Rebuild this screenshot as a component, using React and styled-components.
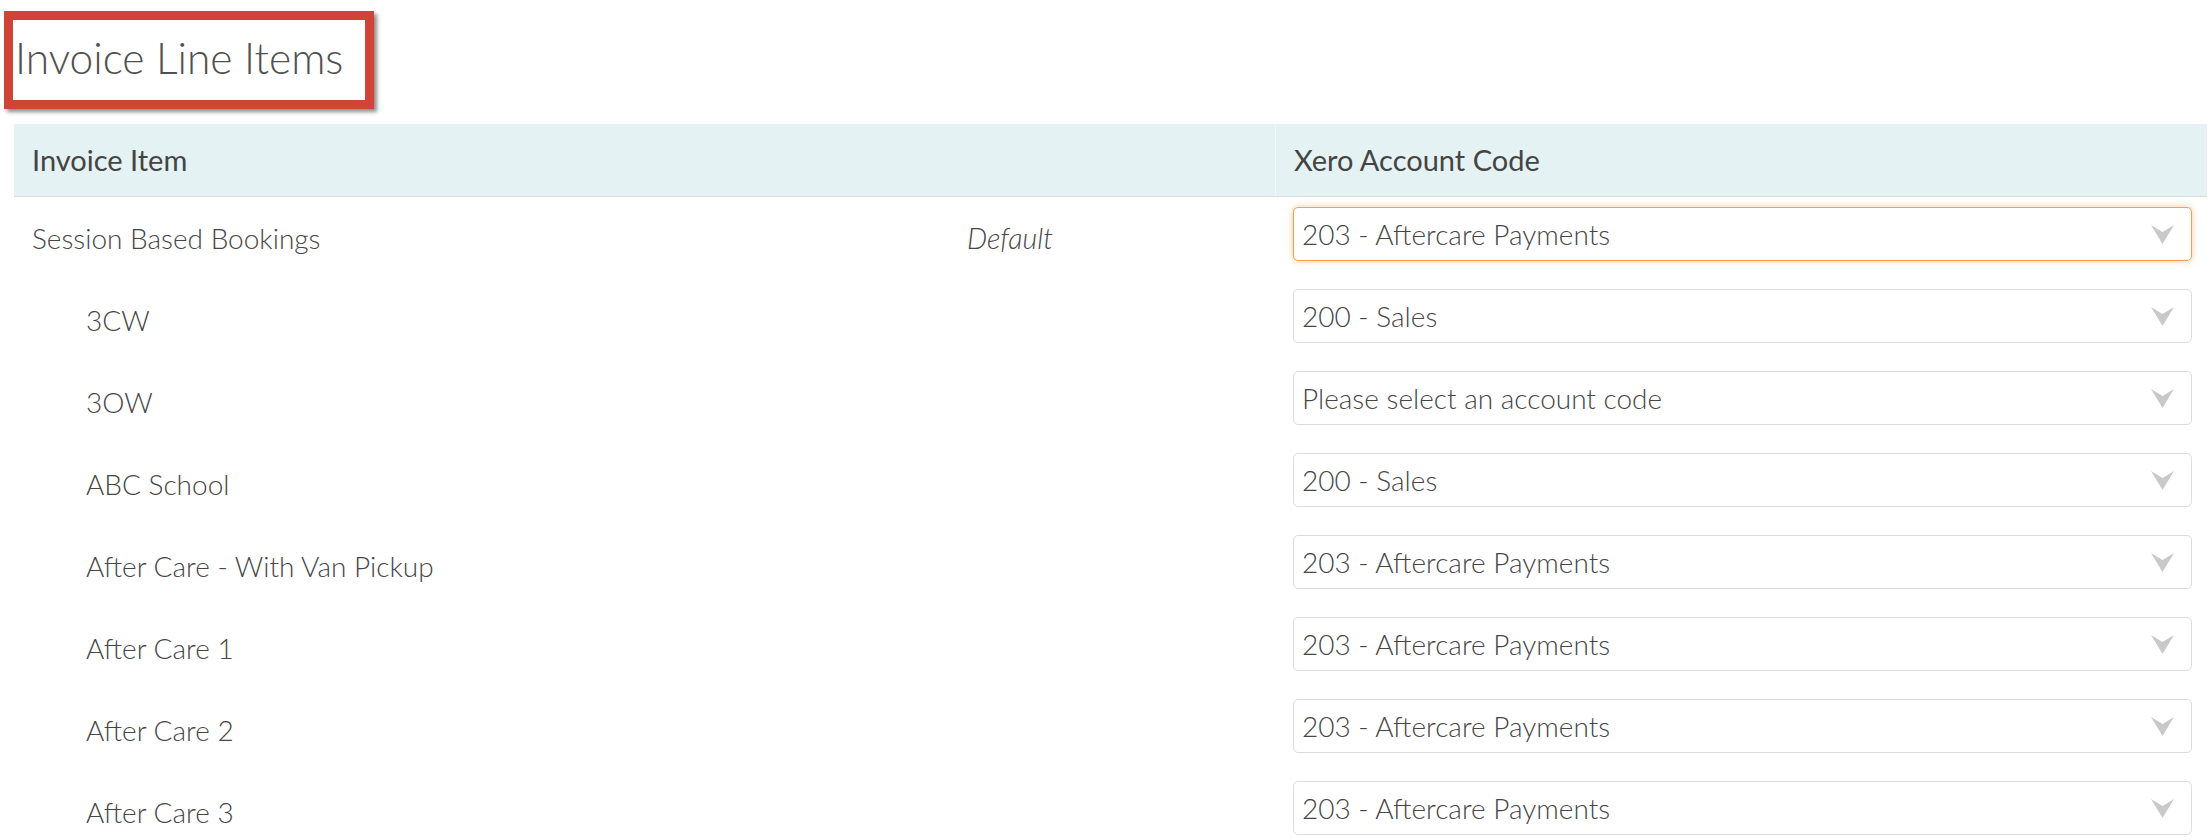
import styled, { createGlobalStyle } from "styled-components";

const GlobalStyle = createGlobalStyle`
  html, body {
    margin: 0;
    padding: 0;
    background: #ffffff;
    font-family: "Lato", "Open Sans", sans-serif;
    color: #555555;
  }
`;

const Page = styled.div`
  width: 2210px;
  height: 840px;
  overflow: hidden;
  padding: 0 3px 0 14px;
  box-sizing: border-box;
`;

const TitleBar = styled.div`
  height: 124px;
  display: flex;
  align-items: flex-start;
  margin-left: -10px;
  padding-top: 11px;
  box-sizing: border-box;
`;

const Highlight = styled.div`
  border: 9px solid #cf4437;
  box-shadow: 3px 3px 4px rgba(0, 0, 0, 0.45);
  height: 98px;
  width: 370px;
  box-sizing: border-box;
  display: flex;
  align-items: center;
  padding-left: 2px;
  padding-bottom: 5px;
`;

const Title = styled.h2`
  margin: 0;
  font-family: "Lato", sans-serif;
  font-weight: 300;
  font-size: 42.5px;
  color: #505050;
  white-space: nowrap;
`;

const Table = styled.div`
  display: grid;
  grid-template-columns: 941px 320px 1fr;
`;

const HeadCell = styled.div`
  grid-column: ${(p) => p.$span || "auto"};
  height: 73px;
  background: #e4f2f3;
  border-bottom: 1px solid #d3dfe0;
  border-left: ${(p) => (p.$divider ? "1px solid #f2f8f8" : "none")};
  box-sizing: border-box;
  display: flex;
  align-items: center;
  padding-left: 18px;
  font-size: 29px;
  font-weight: 400;
  color: #444444;
  padding-bottom: 2px;
`;

const Cell = styled.div`
  height: 82px;
  box-sizing: border-box;
  padding: 10px ${(p) => (p.$select ? "15px" : "0")} 0 ${(p) => p.$indent || "18px"};
  display: flex;
  align-items: flex-start;
`;

const Label = styled.span`
  height: 54px;
  display: flex;
  align-items: center;
  padding-top: 8px;
  box-sizing: border-box;
  font-size: ${(p) => (p.$italic ? "28.5px" : "28px")};
  font-weight: 300;
  font-style: ${(p) => (p.$italic ? "italic" : "normal")};
  color: #464646;
  white-space: nowrap;
`;

const SelectWrap = styled.div`
  position: relative;
  width: 100%;
  height: 54px;
`;

const Select = styled.select`
  appearance: none;
  -webkit-appearance: none;
  width: 100%;
  height: 54px;
  box-sizing: border-box;
  border: 1px solid ${(p) => (p.$focused ? "#f4a04e" : "#dcdcdc")};
  border-radius: 5px;
  box-shadow: ${(p) =>
    p.$focused ? "0 0 7px rgba(245, 160, 80, 0.55)" : "none"};
  background: #ffffff;
  padding: 0 50px 0 8px;
  font-family: "Lato", sans-serif;
  font-size: 28px;
  font-weight: 300;
  color: #464646;
  outline: none;
`;

const Chevron = styled.svg`
  position: absolute;
  right: 18px;
  top: 18px;
  width: 23px;
  height: 19px;
  pointer-events: none;
`;

const accounts = [
  "Please select an account code",
  "200 - Sales",
  "203 - Aftercare Payments",
];

const rows = [
  { name: "Session Based Bookings", note: "Default", code: "203 - Aftercare Payments", focused: true },
  { name: "3CW", child: true, code: "200 - Sales" },
  { name: "3OW", child: true, code: "Please select an account code" },
  { name: "ABC School", child: true, code: "200 - Sales" },
  { name: "After Care - With Van Pickup", child: true, code: "203 - Aftercare Payments" },
  { name: "After Care 1", child: true, code: "203 - Aftercare Payments" },
  { name: "After Care 2", child: true, code: "203 - Aftercare Payments" },
  { name: "After Care 3", child: true, code: "203 - Aftercare Payments" },
];

const AccountSelect = ({ value, focused }) => (
  <SelectWrap>
    <Select defaultValue={value} $focused={focused}>
      {accounts.map((a) => (
        <option key={a} value={a}>
          {a}
        </option>
      ))}
    </Select>
    <Chevron viewBox="0 0 23 19">
      <polygon points="0,0 11.5,7 23,0 11.5,19" fill="#c9c9c9" />
    </Chevron>
  </SelectWrap>
);

export default function App() {
  return (
    <Page>
      <GlobalStyle />
      <TitleBar>
        <Highlight>
          <Title>Invoice Line Items</Title>
        </Highlight>
      </TitleBar>
      <Table>
        <HeadCell $span="span 2">Invoice Item</HeadCell>
        <HeadCell $divider>Xero Account Code</HeadCell>
        {rows.map((r) => (
          <>
            <Cell key={r.name + "-n"} $indent={r.child ? "72px" : "18px"}>
              <Label>{r.name}</Label>
            </Cell>
            <Cell key={r.name + "-d"} $indent="12px">
              {r.note && <Label $italic>{r.note}</Label>}
            </Cell>
            <Cell key={r.name + "-s"} $select $indent="18px">
              <AccountSelect value={r.code} focused={r.focused} />
            </Cell>
          </>
        ))}
      </Table>
    </Page>
  );
}
